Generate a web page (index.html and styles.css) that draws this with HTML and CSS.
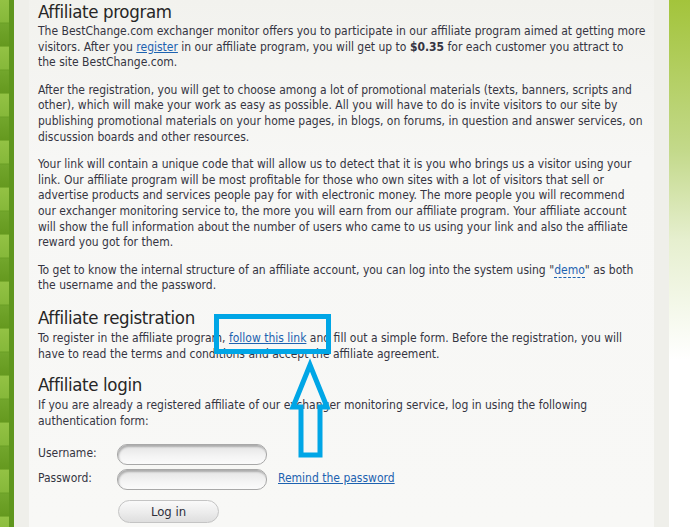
FILE: index.html
```html
<!DOCTYPE html>
<html lang="en">
<head>
<meta charset="utf-8">
<title>Affiliate program</title>
<link rel="stylesheet" href="styles.css">
</head>
<body>
<div class="page">
  <div class="left-deco"><div class="tiles"></div><div class="tiles-edge"></div></div>
  <div class="gutter"></div>
  <main class="content">
    <h1 class="title">Affiliate program</h1>
    <p class="text">The BestChange.com exchanger monitor offers you to participate in our affiliate program aimed at getting more<br>visitors. After you <a class="link" href="#">register</a> in our affiliate program, you will get up to <b>$0.35</b> for each customer you attract to<br>the site BestChange.com.</p>
    <p class="text">After the registration, you will get to choose among a lot of promotional materials (texts, banners, scripts and<br>other), which will make your work as easy as possible. All you will have to do is invite visitors to our site by<br>publishing promotional materials on your home pages, in blogs, on forums, in question and answer services, on<br>discussion boards and other resources.</p>
    <p class="text">Your link will contain a unique code that will allow us to detect that it is you who brings us a visitor using your<br>link. Our affiliate program will be most profitable for those who own sites with a lot of visitors that sell or<br>advertise products and services people pay for with electronic money. The more people you will recommend<br>our exchanger monitoring service to, the more you will earn from our affiliate program. Your affiliate account<br>will show the full information about the number of users who came to us using your link and also the affiliate<br>reward you got for them.</p>
    <p class="text">To get to know the internal structure of an affiliate account, you can log into the system using "<a class="link dashed" href="#">demo</a>" as both<br>the username and the password.</p>
    <h2 class="title sub">Affiliate registration</h2>
    <p class="text tight">To register in the affiliate program, <a class="link" href="#">follow this link</a> and fill out a simple form. Before the registration, you will<br>have to read the terms and conditions and accept the affiliate agreement.</p>
    <h2 class="title sub">Affiliate login</h2>
    <p class="text tight">If you are already a registered affiliate of our exchanger monitoring service, log in using the following<br>authentication form:</p>
    <form class="login">
      <div class="row"><label class="lbl">Username:</label><input class="field" type="text"></div>
      <div class="row"><label class="lbl">Password:</label><input class="field" type="password"><a class="link remind" href="#">Remind the password</a></div>
      <div class="row btn-row"><button class="btn" type="button">Log in</button></div>
    </form>
  </main>
  <div class="gutter"></div>
  <div class="right-deco"></div>
</div>
<svg class="annot" width="690" height="527" viewBox="0 0 690 527">
  <rect x="216.5" y="316.5" width="112" height="35" fill="none" stroke="#00a6e6" stroke-width="5"/>
  <polygon points="310,365 327,407 320,407 320,455 301,455 301,407 293,407" fill="none" stroke="#00a6e6" stroke-width="5" stroke-linejoin="miter"/>
</svg>
</body>
</html>
```

FILE: styles.css
```css
html, body {
  margin: 0;
  padding: 0;
  height: 100%;
  overflow: hidden;
}
body {
  font-family: "DejaVu Sans", Verdana, sans-serif;
  font-stretch: condensed;
  background: #ffffff;
  position: relative;
}
.page {
  display: flex;
  height: 527px;
}
.left-deco {
  display: flex;
  width: 14px;
  flex: none;
}
.tiles {
  width: 9px;
  background: repeating-linear-gradient(to bottom, #93c244 0, #86b83a 22px, #6a9f25 23px, #72a62c 24px, #65991f 46px, #8cbd3e 47px);
}
.tiles-edge {
  width: 5px;
  background: #5f961d;
}
.gutter {
  width: 15px;
  flex: none;
  background: #efefea;
}
.content {
  width: 625px;
  flex: none;
  box-sizing: border-box;
  padding: 0 0 0 9px;
  background: linear-gradient(to bottom, #f2f2ee 0, #f7f7f5 160px, #f8f8f6 100%);
  color: #353542;
  font-size: 12px;
  line-height: 15.6px;
  white-space: nowrap;
}
.right-deco {
  flex: 1;
  background: linear-gradient(to bottom, #a3c43b 0, #c3d98a 150px, #e6efcf 240px, #ffffff 360px);
}
.title {
  margin: 0;
  font-weight: normal;
  color: #262626;
  font-size: 18.5px;
  letter-spacing: -0.35px;
  line-height: 24px;
}
.sub {
  margin-top: 11px;
  padding-bottom: 1px;
}
.text {
  margin: 0 0 12px;
}
.text.tight {
  margin-bottom: 0;
}
.link {
  color: #1d62b0;
  text-decoration: underline;
}
.dashed {
  text-decoration: none;
  border-bottom: 1px dashed #1d62b0;
}
.login {
  margin-top: 15px;
  display: flex;
  flex-direction: column;
  gap: 5px;
}
.row {
  display: flex;
  align-items: center;
  height: 20px;
}
.lbl {
  width: 79px;
  flex: none;
}
.field {
  width: 150px;
  height: 21px;
  box-sizing: border-box;
  border: 1px solid #a8a8a8;
  border-radius: 10px;
  background: linear-gradient(to bottom, #e4e4e4, #f4f4f4 60%, #fbfbfb);
  box-shadow: inset 1px 2px 2px rgba(0,0,0,0.25);
  margin: 0;
}
.remind {
  margin-left: 11px;
}
.btn-row {
  height: 23px;
  margin-top: 6px;
  padding-left: 80px;
}
.btn {
  width: 101px;
  height: 23px;
  border: 1px solid #c4c4c4;
  border-radius: 12px;
  background: linear-gradient(to bottom, #fafafa, #ececec 55%, #dedede);
  font-family: "DejaVu Sans", Verdana, sans-serif;
  font-stretch: condensed;
  font-size: 13px;
  color: #2e2e3a;
  padding: 0;
}
.annot {
  position: absolute;
  left: 0;
  top: 0;
  pointer-events: none;
}
```
